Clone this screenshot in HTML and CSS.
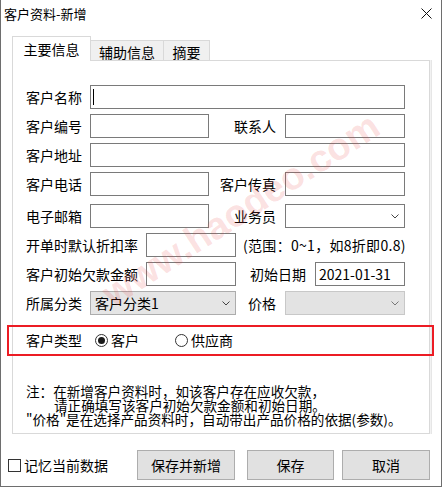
FILE: index.html
```html
<!DOCTYPE html>
<html lang="zh-CN">
<head>
  <meta charset="UTF-8" />
  <title>客户资料-新增</title>
  <link rel="stylesheet" href="styles.css">
</head>
<body>
  <div class="window">
    <div class="titlebar">
      <span class="title">客户资料-新增</span>
      <svg class="close" width="11" height="11" viewBox="0 0 11 11">
        <path d="M0.5 0.5 L10.5 10.5 M10.5 0.5 L0.5 10.5" stroke="#111" stroke-width="1" fill="none"/>
      </svg>
    </div>

    <div class="tabs">
      <div class="tab active">主要信息</div>
      <div class="tab">辅助信息</div>
      <div class="tab last">摘要</div>
    </div>

    <div class="panel">
      <div class="row">
        <span class="lbl">客户名称</span>
        <div class="field w-full"><span class="caret"></span></div>
      </div>
      <div class="row">
        <span class="lbl">客户编号</span>
        <div class="field w-half"></div>
        <span class="rlbl w-76">联系人</span>
        <div class="field w-right"></div>
      </div>
      <div class="row">
        <span class="lbl">客户地址</span>
        <div class="field w-full"></div>
      </div>
      <div class="row">
        <span class="lbl">客户电话</span>
        <div class="field w-half"></div>
        <span class="rlbl w-76">客户传真</span>
        <div class="field w-right"></div>
      </div>
      <div class="row sp">
        <span class="lbl">电子邮箱</span>
        <div class="field w-half"></div>
        <span class="rlbl w-76">业务员</span>
        <div class="field select w-right">
          <span></span>
          <svg width="8" height="5" viewBox="0 0 8 5"><path d="M0.5 0.5 L4 4 L7.5 0.5" stroke="#444" fill="none"/></svg>
        </div>
      </div>
      <div class="row">
        <span class="lbl lbl-long">开单时默认折扣率</span>
        <div class="field w-mid"></div>
        <span class="hint">(范围：0~1，如8折即0.8)</span>
      </div>
      <div class="row">
        <span class="lbl lbl-long">客户初始欠款金额</span>
        <div class="field w-mid"></div>
        <span class="rlbl w-79">初始日期</span>
        <div class="field w-mid date">2021-01-31</div>
      </div>
      <div class="row">
        <span class="lbl">所属分类</span>
        <div class="field select gray w-146">
          <span>客户分类1</span>
          <svg width="8" height="5" viewBox="0 0 8 5"><path d="M0.5 0.5 L4 4 L7.5 0.5" stroke="#444" fill="none"/></svg>
        </div>
        <span class="rlbl w-49">价格</span>
        <div class="field select disabled w-right">
          <span></span>
          <svg width="8" height="5" viewBox="0 0 8 5"><path d="M0.5 0.5 L4 4 L7.5 0.5" stroke="#777" fill="none"/></svg>
        </div>
      </div>

      <div class="row radios">
        <span class="lbl lbl-radio">客户类型</span>
        <label class="option first"><span class="radio checked"></span>客户</label>
        <label class="option"><span class="radio"></span>供应商</label>
      </div>

      <div class="notes">
        <p>注：在新增客户资料时，如该客户存在应收欠款，</p>
        <p class="indent">请正确填写该客户初始欠款金额和初始日期。</p>
        <p>"价格"是在选择产品资料时，自动带出产品价格的依据(参数)。</p>
      </div>
    </div>

    <div class="bottom">
      <label class="remember"><span class="check"></span>记忆当前数据</label>
      <button class="btn b1">保存并新增</button>
      <button class="btn b2">保存</button>
      <button class="btn b3">取消</button>
    </div>

    <div class="highlight"></div>
    <div class="watermark">www.haodeo.com</div>
  </div>
</body>
</html>
```

FILE: styles.css
```css
* {
  box-sizing: border-box;
}

body {
  margin: 0;
  background: #ffffff;
  font-family: "Noto Sans CJK SC", "Noto Sans", sans-serif;
  font-size: 14px;
  color: #000;
}

.window {
  position: relative;
  width: 442px;
  height: 487px;
  background: #fff;
  border: 1px solid #6e6e6e;
  border-top: none;
  overflow: hidden;
}

/* title bar */
.titlebar {
  height: 30px;
  display: flex;
  justify-content: space-between;
  align-items: flex-start;
  padding: 5px 9px 0 3px;
}

.title {
  font-size: 13px;
  line-height: 17px;
}

.close {
  margin-top: 3px;
}

/* tabs */
.tabs {
  display: flex;
  align-items: flex-end;
  height: 24px;
  margin: 6px 0 0 11px;
}

.tab {
  height: 20px;
  line-height: 20px;
  padding-top: 1px;
  background: #f0f0f0;
  border: 1px solid #d9d9d9;
  border-bottom: none;
  border-left: none;
  text-align: center;
  width: 73px;
}

.tab.active {
  position: relative;
  z-index: 1;
  height: 25px;
  line-height: 24px;
  padding-top: 0;
  margin-bottom: -1px;
  width: 79px;
  background: #fff;
  border-left: 1px solid #d9d9d9;
}

.tab.last {
  width: 46px;
}

/* main panel */
.panel {
  width: 418px;
  height: 374px;
  margin-left: 11px;
  border: 1px solid #d9d9d9;
  box-shadow: 1px 0 0 #f2f2f2, 2px 0 0 #e6e6e6;
  padding: 24px 0 0 13px;
}

.row {
  display: flex;
  align-items: center;
  height: 24px;
}

.row + .row {
  margin-top: 5px;
}

.row.sp {
  margin-top: 8px;
}

.lbl {
  width: 64px;
  line-height: 24px;
  white-space: nowrap;
}

.lbl-long {
  width: 120px;
}

.lbl-radio {
  width: 69px;
}

.rlbl {
  text-align: right;
  padding-right: 9px;
  white-space: nowrap;
}

.w-76 { width: 76px; }
.w-79 { width: 79px; }
.w-49 { width: 49px; }

.field {
  height: 24px;
  border: 1px solid #7a7a7a;
  background: #fff;
}

.w-full { width: 315px; }
.w-half { width: 119px; }
.w-right { width: 120px; }
.w-mid { width: 90px; }
.w-146 { width: 146px; }

.caret {
  display: block;
  width: 1px;
  height: 16px;
  margin: 3px 0 0 2px;
  background: #000;
}

.date {
  padding-left: 3px;
  line-height: 22px;
}

.select {
  display: flex;
  justify-content: space-between;
  align-items: center;
  padding: 0 5px 0 4px;
}

.select.gray {
  background: #e5e5e5;
  border-color: #acacac;
}

.select.disabled {
  background: #e3e3e3;
  border-color: #c8c8c8;
}

.hint {
  margin-left: 7px;
  white-space: nowrap;
  letter-spacing: 0.3px;
}

/* customer type */
.row.radios {
  margin-top: 13px;
}

.option {
  display: flex;
  align-items: center;
  gap: 3px;
}

.option.first {
  width: 80px;
}

.radio {
  width: 13px;
  height: 13px;
  border: 1px solid #333;
  border-radius: 50%;
  background: #fff;
  display: flex;
  align-items: center;
  justify-content: center;
}

.radio.checked::after {
  content: "";
  width: 7px;
  height: 7px;
  border-radius: 50%;
  background: #1a1a1a;
}

.notes {
  margin-top: 32px;
  font-size: 13.6px;
  line-height: 14px;
}

.notes p {
  margin: 0;
  white-space: nowrap;
}

.notes .indent {
  padding-left: 28px;
}

/* bottom buttons */
.bottom {
  display: flex;
  align-items: center;
  height: 30px;
  margin-top: 16px;
  padding-left: 7px;
}

.remember {
  display: flex;
  align-items: center;
  gap: 3px;
  width: 129px;
}

.check {
  width: 13px;
  height: 13px;
  border: 1px solid #333;
  background: #fff;
}

.btn {
  height: 30px;
  font-family: inherit;
  font-size: 14px;
  background: #e1e1e1;
  border: 1px solid #adadad;
  padding: 0;
  color: #000;
}

.b1 { width: 98px; }
.b2 { width: 87px; margin-left: 12px; }
.b3 { width: 88px; margin-left: 8px; }

/* overlays */
.highlight {
  position: absolute;
  left: 6px;
  top: 325px;
  width: 427px;
  height: 31px;
  border: 2px solid #ec1c24;
  pointer-events: none;
}

.watermark {
  position: absolute;
  left: 240px;
  top: 210px;
  transform: translate(-50%, -50%) rotate(-33deg);
  font-family: "Liberation Sans", sans-serif;
  font-size: 38px;
  font-weight: bold;
  color: rgba(235, 70, 70, 0.17);
  white-space: nowrap;
  pointer-events: none;
}
```
